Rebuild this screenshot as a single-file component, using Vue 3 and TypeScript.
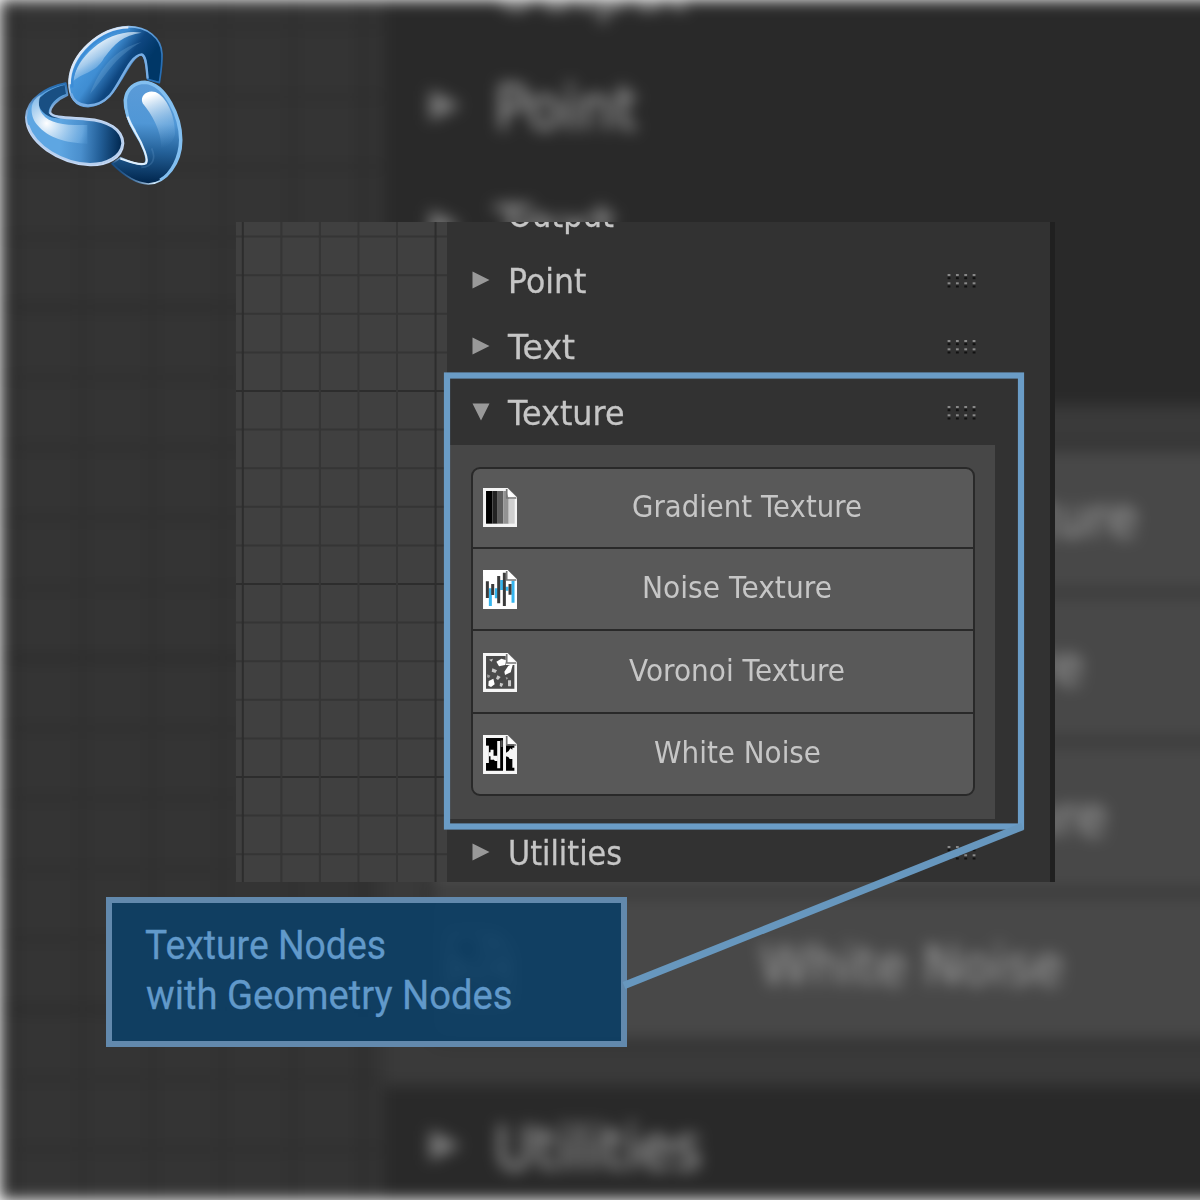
<script setup lang="ts">
interface Entry {
  label: string
  width: number
  icon: 'gradient' | 'noise' | 'voronoi' | 'white'
  left: number
}
interface Section {
  label: string
  width: number
  open: boolean
  entries: Entry[]
}

const layers: string[] = ['backdrop', 'front']

const sections: Section[] = [
  { label: 'Output', width: 106, open: false, entries: [] },
  { label: 'Point', width: 78.5, open: false, entries: [] },
  { label: 'Text', width: 67, open: false, entries: [] },
  {
    label: 'Texture',
    width: 116.5,
    open: true,
    entries: [
      { label: 'Gradient Texture', width: 230, icon: 'gradient', left: 159 },
      { label: 'Noise Texture', width: 190, icon: 'noise', left: 169.5 },
      { label: 'Voronoi Texture', width: 216, icon: 'voronoi', left: 156.5 },
      { label: 'White Noise', width: 167, icon: 'white', left: 181 },
    ],
  },
  { label: 'Utilities', width: 114, open: false, entries: [] },
]

const dots: number[] = [0, 1, 2, 3]
const gridV: number[] = [0, 1, 2, 3, 4, 5]
const gridH: number[] = Array.from({ length: 17 }, (_, i) => i)
</script>

<template>
  <main class="stage">
    <div v-for="layer in layers" :key="layer" :class="['layer', layer]">
      <div class="editor">
        <svg class="canvas" width="211" height="660" viewBox="0 0 211 660">
          <g stroke="#353535" stroke-width="2">
            <line v-for="i in gridH" :key="'h' + i" x1="0" x2="211" :y1="14.6 + i * 38.6" :y2="14.6 + i * 38.6" :class="{ major: i % 5 === 4 }" />
            <line v-for="i in gridV" :key="'v' + i" y1="0" y2="660" :x1="6.8 + i * 38.55" :x2="6.8 + i * 38.55" :class="{ major: i % 5 === 0 }" />
          </g>
        </svg>
        <div class="sidebar">
          <section v-for="s in sections" :key="s.label">
            <header class="head">
              <svg class="arrow" width="18" height="18" viewBox="0 0 18 18">
                <path v-if="s.open" d="M0.5 .5H17.5L9 17.5Z" fill="#999" />
                <path v-else-if="s.label !== 'Output'" d="M.5 .5L17.5 9L.5 17.5Z" fill="#999" />
              </svg>
              <svg class="title" :width="s.width" height="46">
                <text v-if="layer === 'front' || !s.open" x="0" y="35.2" font-size="33.5" :textLength="s.width" lengthAdjust="spacingAndGlyphs">{{ s.label }}</text>
              </svg>
              <svg v-if="s.label !== 'Output'" class="grip" width="30" height="18" viewBox="0 0 30 18">
                <g v-for="d in dots" :key="d">
                  <rect :x="d * 8.35 + 0.6" y="2" width="2.8" height="2" fill="#888" />
                  <rect :x="d * 8.35 + 0.6" y="5.2" width="2.8" height="2" fill="#111" />
                  <rect :x="d * 8.35 + 0.6" y="10.3" width="2.8" height="2" fill="#888" />
                  <rect :x="d * 8.35 + 0.6" y="13.5" width="2.8" height="2" fill="#111" />
                </g>
              </svg>
            </header>
            <div v-if="s.open" class="body">
              <div class="buttons">
                <div v-for="e in s.entries" :key="e.label" class="button">
                  <svg class="icon" width="34.4" height="39" viewBox="0 0 103 117">
                    <path v-if="e.icon === 'noise'" d="M0 0H74L103 29V117H0Z" fill="#fff" />
                    <g v-else-if="e.icon === 'gradient'">
                      <path d="M0 0H74L103 29V117H0Z" fill="#f4f4f4" />
                      <path d="M9 9H28V107H9Z" fill="#000" />
                      <path d="M28 9H44V107H28Z" fill="#222" />
                      <path d="M44 9H61V107H44Z" fill="#5c5c5c" />
                      <path d="M61 9H69L77 31V107H61Z" fill="#929292" />
                      <path d="M77 33H95V107H77Z" fill="#cfcfcf" />
                    </g>
                    <path v-else d="M0 0H74L103 29V117H0Z" fill="#f6f6f6" />
                    <g v-if="e.icon === 'noise'">
                      <path d="M22 55V108M40 55V85M56 30V60M72 50V62M90 32V98" stroke="#35b5ee" stroke-width="9" />
                      <path d="M13 34V84M29 42V75M47 18V100M64 8V108M81 42V74" stroke="#3b3b3b" stroke-width="9" />
                    </g>
                    <g v-if="e.icon === 'voronoi'">
                      <path d="M9 9H68V36H94V107H9Z" fill="#4b4b4b" />
                      <path d="M40 26L55 17L70 22L66 36L48 40ZM76 38L90 32L83 58L66 66L64 56ZM17 84L31 77L35 94L24 102L16 98Z" fill="#fff" />
                      <path d="M18 20L30 17L26 26ZM28 46L42 52L37 60L26 56ZM43 67L53 72L45 81L39 77ZM51 89L61 92L56 102L50 99ZM75 82H84V100H75Z" fill="#c9c9c9" />
                      <path d="M13 64L22 68L18 75L12 73ZM68 72L76 75L70 80Z" fill="#9a9a9a" />
                    </g>
                    <g v-if="e.icon === 'white'">
                      <path d="M9 9H60V107H9ZM69 28H94V107H69Z" fill="#000" />
                      <path d="M13 32V84" stroke="#f6f6f6" stroke-width="9" />
                      <path d="M27 44V74M47 18V100" stroke="#f6f6f6" stroke-width="9" />
                      <path d="M17 52H25V64H17ZM30 62H44V78H36L30 72Z" fill="#f6f6f6" />
                      <path d="M68 54L77 48L82 40L88 44V72H80L76 66L68 64ZM88 38H97V98H88Z" fill="#f6f6f6" />
                      <path d="M56 16V36" stroke="#555" stroke-width="6" />
                    </g>
                    <path d="M71 3V30H100" fill="none" stroke="#777" stroke-width="5" />
                    <path d="M75 6V26H95Z" fill="#fff" />
                  </svg>
                  <svg class="label" :style="{ marginLeft: e.left - 44.4 + 'px' }" :width="e.width" height="44">
                    <text x="0" y="32" font-size="29.5" :textLength="e.width" lengthAdjust="spacingAndGlyphs">{{ e.label }}</text>
                  </svg>
                </div>
              </div>
            </div>
          </section>
        </div>
        <div class="edge"></div>
      </div>
    </div>

    <svg class="logo" width="220" height="220" viewBox="0 0 660 660">
      <defs>
        <linearGradient id="top" gradientUnits="userSpaceOnUse" x1="250" y1="170" x2="390" y2="265">
          <stop offset="0" stop-color="#4a9be0" />
          <stop offset=".35" stop-color="#3f8dd2" />
          <stop offset=".68" stop-color="#0f4781" />
          <stop offset="1" stop-color="#003767" />
        </linearGradient>
        <linearGradient id="topShine" gradientUnits="userSpaceOnUse" x1="280" y1="120" x2="345" y2="225">
          <stop offset="0" stop-color="#fff" />
          <stop offset=".4" stop-color="#c4dcf1" stop-opacity=".75" />
          <stop offset="1" stop-color="#4a9be0" stop-opacity="0" />
        </linearGradient>
        <linearGradient id="topRim" gradientUnits="userSpaceOnUse" x1="260" y1="90" x2="440" y2="240">
          <stop offset="0" stop-color="#f0f4fc" />
          <stop offset=".5" stop-color="#75b0e8" />
          <stop offset="1" stop-color="#276eb4" />
        </linearGradient>
        <linearGradient id="left" gradientUnits="userSpaceOnUse" x1="180" y1="410" x2="366" y2="420">
          <stop offset="0" stop-color="#5ea6e2" />
          <stop offset=".35" stop-color="#4a8fcd" />
          <stop offset=".65" stop-color="#235f98" />
          <stop offset="1" stop-color="#00274f" />
        </linearGradient>
        <radialGradient id="leftShine" gradientUnits="userSpaceOnUse" cx="140" cy="370" r="130">
          <stop offset="0" stop-color="#fff" />
          <stop offset=".85" stop-color="#7bb6e8" stop-opacity=".6" />
          <stop offset="1" stop-color="#5b9fd9" stop-opacity=".3" />
        </radialGradient>
        <linearGradient id="leftRim" gradientUnits="userSpaceOnUse" x1="190" y1="255" x2="210" y2="350">
          <stop offset="0" stop-color="#286eb2" />
          <stop offset="1" stop-color="#c4d8f4" />
        </linearGradient>
        <linearGradient id="right" gradientUnits="userSpaceOnUse" x1="450" y1="250" x2="440" y2="550">
          <stop offset="0" stop-color="#5b9bd8" />
          <stop offset=".4" stop-color="#5097d6" />
          <stop offset=".68" stop-color="#246199" />
          <stop offset="1" stop-color="#00254c" />
        </linearGradient>
        <linearGradient id="rightShine" gradientUnits="userSpaceOnUse" x1="440" y1="290" x2="500" y2="440">
          <stop offset="0" stop-color="#fff" />
          <stop offset="1" stop-color="#6cabe0" stop-opacity="0" />
        </linearGradient>
        <linearGradient id="rightRim" gradientUnits="userSpaceOnUse" x1="345" y1="500" x2="410" y2="440">
          <stop offset="0" stop-color="#174c83" />
          <stop offset=".6" stop-color="#cfe9fd" />
          <stop offset="1" stop-color="#81bff1" />
        </linearGradient>
      </defs>
      <path d="M443 238L478 248C482 222 487 195 486 162C484 112 440 80 385 80C300 82 212 160 207 243C205 293 228 320 264 320C318 317 345 270 365 237C385 204 405 165 424 165C440 168 440 210 443 238Z" fill="url(#top)" stroke="url(#topRim)" stroke-width="5" stroke-linejoin="round" />
      <path d="M425 98C330 82 230 165 219 245C244 218 288 220 312 174C344 130 370 105 425 98Z" fill="url(#topShine)" />
      <path d="M425 126C350 145 300 200 270 282C312 236 342 170 425 126Z" fill="#84b6e1" opacity=".25" />
      <path d="M213 280C228 326 290 328 330 286C365 245 388 166 425 163C440 168 439 205 443 236" fill="none" stroke="#77ade4" stroke-width="7" />
      <path d="M217 262C210 180 300 88 390 88" fill="none" stroke="#3c8cd6" stroke-width="7" />
      <path d="M209 253C208 164 300 83 385 82" fill="none" stroke="#dce8f7" stroke-width="7" />

      <path d="M197 250L202 285C172 298 150 320 151 338C157 353 205 352 260 356C325 360 370 388 370 430C367 476 320 497 270 496C178 490 80 430 78 352C80 294 145 260 197 250Z" fill="url(#left)" stroke="url(#leftRim)" stroke-width="6" stroke-linejoin="round" />
      <path d="M194 255L198 282C170 290 145 318 146 339C154 347 170 348 184 353C150 362 105 330 118 295C140 272 170 260 194 255Z" fill="#07396c" opacity=".8" />
      <path d="M122 284C87 302 89 345 110 373C145 416 198 429 262 431V375C198 376 151 373 127 342C114 323 115 305 122 284Z" fill="url(#leftShine)" />
      <path d="M84 375C105 440 190 489 270 492C320 492 362 470 367 430C365 390 325 363 260 359C205 355 157 355 150 338" fill="none" stroke="#b8d0ef" stroke-width="6" />

      <path d="M336 491L362 473C400 490 425 495 435 490C447 480 425 430 405 400C385 365 372 335 373 300C378 262 405 244 435 244C500 250 545 350 545 420C545 490 500 550 445 552C400 550 360 515 336 491Z" fill="url(#right)" stroke="url(#rightRim)" stroke-width="5" stroke-linejoin="round" />
      <path d="M405 394C385 365 376 335 377 300C381 266 407 248 435 248C495 253 540 350 541 420C540 470 515 520 480 540" fill="none" stroke="#83bff0" stroke-width="8" />
      <path d="M428 310C418 286 442 269 466 276C499 289 526 346 525 404C516 433 497 445 484 445C484 390 456 344 428 310Z" fill="url(#rightShine)" />
      <path d="M361 476C400 490 425 497 438 490C447 480 430 437 408 400C398 383 388 365 383 350" fill="none" stroke="#dceefe" stroke-width="6" />
      <path d="M455 445C468 475 460 500 424 502" fill="none" stroke="#6aa1cf" stroke-width="5" opacity=".25" />
    </svg>

    <div class="callout">
      <svg width="380" height="104" viewBox="0 0 380 104">
        <text x="-1" y="36.3" textLength="241" lengthAdjust="spacingAndGlyphs">Texture Nodes</text>
        <text x="0" y="86.3" textLength="366.5" lengthAdjust="spacingAndGlyphs">with Geometry Nodes</text>
      </svg>
    </div>

    <svg class="marker" width="1200" height="1200" viewBox="0 0 1200 1200">
      <rect x="447" y="375.5" width="574" height="451" fill="none" stroke="#6a9cc6" stroke-width="6.2" />
      <line x1="624" y1="985.5" x2="1022.5" y2="826.5" stroke="#6797be" stroke-width="7.4" />
    </svg>
  </main>
</template>

<style>
body {
  margin: 0;
  background: #fff;
}
</style>

<style scoped>
.stage {
  position: relative;
  width: 1200px;
  height: 1200px;
  overflow: hidden;
  background: #fff;
  font-family: "DejaVu Sans", sans-serif;
}
.layer {
  position: absolute;
}
.backdrop {
  left: 0;
  top: 0;
  filter: brightness(0.81) blur(7.5px);
}
.backdrop .editor {
  transform: scale(1.8182);
  transform-origin: 0 0;
}
.front {
  left: 236px;
  top: 222px;
}
.front text,
.front .icon,
.front .canvas g,
.front .arrow {
  filter: blur(0.7px);
}
.editor {
  display: flex;
  width: 819px;
  height: 660px;
  overflow: hidden;
  background: #323232;
}
.canvas {
  display: block;
  flex: none;
  background: #404040;
}
.major {
  stroke: #2d2d2d;
}
.sidebar {
  flex: 1;
  margin-top: -40px;
}
.edge {
  width: 5.5px;
  background: #202020;
}
.head {
  display: flex;
  align-items: center;
  height: 66px;
  padding: 0 72.5px 0 25px;
}
.arrow {
  flex: none;
  margin-top: -3px;
}
.title {
  flex: none;
  margin-left: 18px;
  overflow: visible;
}
text {
  fill: #c6c6c6;
}
.title text {
  stroke: #c6c6c6;
  stroke-width: 0.3px;
}
.grip {
  margin-left: auto;
}
.body {
  box-sizing: border-box;
  width: 548px;
  height: 374px;
  margin-top: -1px;
  margin-bottom: 1px;
  padding: 22px 20px 22px 23.5px;
  background: #474747;
}
.buttons {
  box-sizing: border-box;
  height: 329px;
  border: 2.5px solid #292929;
  border-radius: 9px;
  overflow: hidden;
  background: #595959;
}
.button {
  box-sizing: border-box;
  display: flex;
  align-items: center;
  height: 82.5px;
  padding-left: 10.5px;
  border-top: 2.5px solid #292929;
}
.button:first-child {
  height: 77.5px;
  border-top: 0;
}
.button .icon {
  flex: none;
  margin-top: 2px;
}
.button:first-child .icon {
  margin-top: 0;
}
.label {
  flex: none;
  margin-top: -1px;
  overflow: visible;
}
.callout {
  position: absolute;
  left: 106px;
  top: 897px;
  box-sizing: border-box;
  width: 521px;
  height: 150px;
  padding: 20px 0 0 34px;
  border: 6px solid #6289ad;
  background: rgba(14, 63, 100, 0.94);
}
.callout svg {
  overflow: visible;
}
.callout text {
  fill: #6199ca;
  stroke: #6199ca;
  stroke-width: 0.3px;
  font: 41px Roboto, sans-serif;
}
.logo,
.marker {
  position: absolute;
  left: 0;
  top: 0;
}
</style>
